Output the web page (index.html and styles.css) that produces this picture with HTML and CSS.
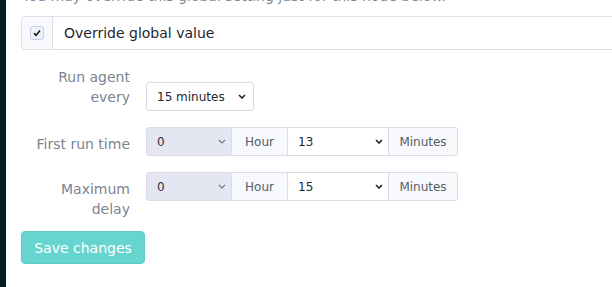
FILE: index.html
```html
<!DOCTYPE html>
<html>
<head>
    <title>Agent settings</title>
    <link rel="stylesheet" href="styles.css">
</head>
<body>
    <div class="sidebar"></div>
    <div class="content">
        <p class="hint">You may override this global setting just for this node below.</p>
        <div class="override-group">
            <label class="override-check">
                <span class="checkbox">
                    <svg width="10" height="10" viewBox="0 0 10 10"><path d="M2 5.2 L4 7.3 L8 2.6" fill="none" stroke="#111" stroke-width="1.5"/></svg>
                </span>
            </label>
            <div class="override-text">Override global value</div>
        </div>

        <div class="form-grid">
            <div class="form-label">Run agent every</div>
            <div class="control first-control">
                <select class="select select-interval">
                    <option>15 minutes</option>
                </select>
            </div>

            <div class="form-label">First run time</div>
            <div class="control input-group">
                <select class="select select-hour" disabled>
                    <option>0</option>
                </select>
                <span class="addon addon-hour">Hour</span>
                <select class="select select-minute">
                    <option>13</option>
                </select>
                <span class="addon addon-minutes">Minutes</span>
            </div>

            <div class="form-label">Maximum delay</div>
            <div class="control input-group">
                <select class="select select-hour" disabled>
                    <option>0</option>
                </select>
                <span class="addon addon-hour">Hour</span>
                <select class="select select-minute">
                    <option>15</option>
                </select>
                <span class="addon addon-minutes">Minutes</span>
            </div>
        </div>

        <button class="save-btn" type="button">Save changes</button>
    </div>
</body>
</html>
```

FILE: styles.css
```css
html, body {
    height: 100%;
}
body {
    margin: 0;
    display: flex;
    background-color: #fff;
    font-family: "DejaVu Sans", Verdana, sans-serif;
    font-size: 14px;
    overflow: hidden;
}
.sidebar {
    width: 6px;
    flex-shrink: 0;
    background-color: #061b23;
}
.content {
    flex: 1;
    padding-left: 15px;
    min-width: 0;
}
.hint {
    margin: -14px 0 0 1px;
    line-height: 20px;
    color: #808898;
    white-space: nowrap;
}
.override-group {
    display: flex;
    width: 640px;
    height: 34px;
    margin-top: 10px;
    border: 1px solid #dcdfea;
    border-radius: 4px;
    box-sizing: border-box;
}
.override-check {
    width: 30px;
    flex-shrink: 0;
    display: flex;
    align-items: center;
    justify-content: center;
    background-color: #f8f9fd;
    border-right: 1px solid #dcdfea;
    border-radius: 4px 0 0 4px;
}
.checkbox {
    width: 14px;
    height: 14px;
    box-sizing: border-box;
    border: 1px solid #c9cfe6;
    border-radius: 3px;
    background-color: #eef0f9;
    display: flex;
    align-items: center;
    justify-content: center;
    margin-top: -1px;
}
.override-text {
    display: flex;
    align-items: center;
    padding-left: 11px;
    color: #1f2630;
}
.form-grid {
    display: grid;
    grid-template-columns: 109px auto;
    column-gap: 16px;
    row-gap: 16px;
    margin-top: 10px;
    justify-content: start;
    align-items: start;
}
.form-label {
    padding-top: 7px;
    line-height: 20px;
    color: #7b8494;
    text-align: right;
    width: 95px;
    justify-self: end;
}
.first-control {
    padding-top: 22px;
}
.input-group {
    display: flex;
}
.select {
    -webkit-appearance: none;
    appearance: none;
    height: 29px;
    margin: 0;
    padding: 0 24px 0 10px;
    font-family: "DejaVu Sans", Verdana, sans-serif;
    font-size: 12px;
    color: #1f2630;
    background-color: #fff;
    border: 1px solid #d9dce8;
    border-radius: 3px;
    background-repeat: no-repeat;
    background-position: right 5px center;
    background-image: url("data:image/svg+xml,%3Csvg xmlns='http://www.w3.org/2000/svg' width='8' height='5' viewBox='0 0 8 5'%3E%3Cpath d='M1 1 L4 4 L7 1' fill='none' stroke='%23222' stroke-width='1.6'/%3E%3C/svg%3E");
}
.select-interval {
    width: 108px;
    background-position: right 7px center;
}
.select-hour {
    width: 86px;
    background-color: #e4e7f1;
    color: #2c323c;
    border-radius: 3px 0 0 3px;
    background-image: url("data:image/svg+xml,%3Csvg xmlns='http://www.w3.org/2000/svg' width='8' height='5' viewBox='0 0 8 5'%3E%3Cpath d='M1 1 L4 4 L7 1' fill='none' stroke='%23707784' stroke-width='1.1'/%3E%3C/svg%3E");
    opacity: 1;
}
.select-minute {
    width: 101px;
    border-radius: 0;
    border-left: none;
}
.addon {
    height: 29px;
    box-sizing: border-box;
    display: flex;
    align-items: center;
    justify-content: center;
    font-size: 12px;
    color: #555c66;
    background-color: #f8f9fd;
    border: 1px solid #d9dce8;
    border-left: none;
}
.addon-hour {
    width: 56px;
}
.addon-minutes {
    width: 69px;
    border-radius: 0 3px 3px 0;
}
.save-btn {
    margin-top: 12px;
    width: 124px;
    height: 33px;
    padding: 0;
    font-family: "DejaVu Sans", Verdana, sans-serif;
    font-size: 14px;
    color: #fff;
    background-color: #67d5cf;
    border: 1px solid #5fcdc6;
    border-radius: 4px;
    cursor: pointer;
}
```
